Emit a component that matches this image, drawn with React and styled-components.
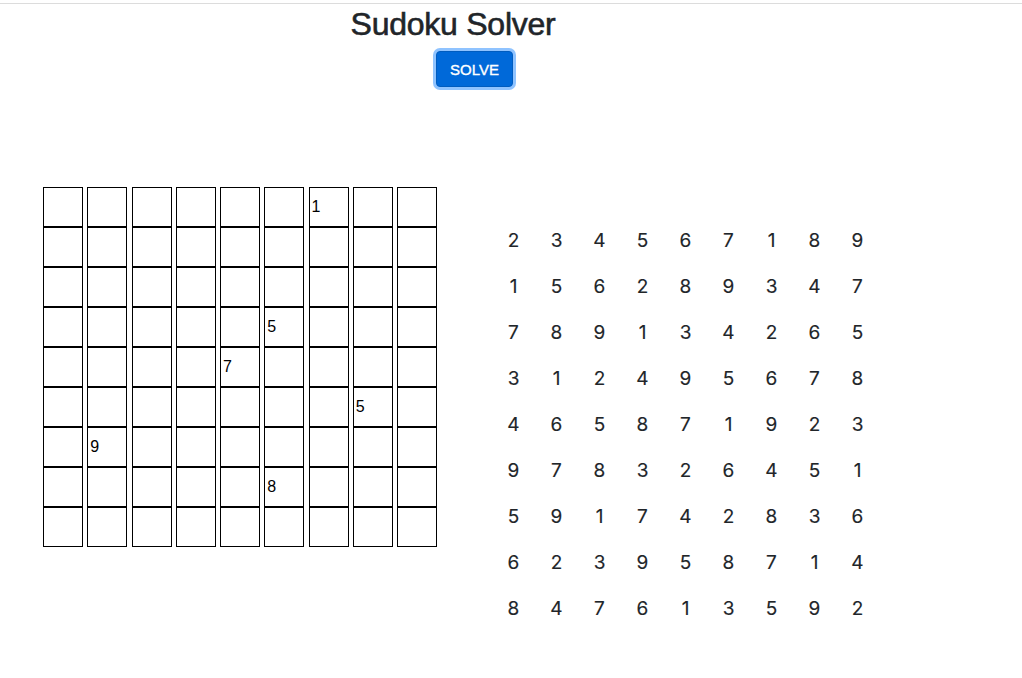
import React from "react";
import styled, { createGlobalStyle } from "styled-components";

const Global = createGlobalStyle`
  html, body { margin: 0; padding: 0; background: #fff; }
  body {
    font-family: "Liberation Sans", Arial, sans-serif;
    color: #212529;
  }
`;

const Page = styled.div`
  border-top: 1px solid #dcdcdc;
  margin-top: 3px;
  width: 1022px;
`;

const Title = styled.h2`
  margin: 1px 0 0;
  padding-right: 116px;
  text-align: center;
  font-family: "Liberation Sans", Arial, sans-serif;
  font-size: 32px;
  font-weight: 500;
  letter-spacing: -0.25px;
  -webkit-text-stroke: 0.6px #212529;
  line-height: 1.2;
  color: #212529;
`;

const ButtonRow = styled.div`
  display: flex;
  justify-content: center;
  padding-right: 73px;
  margin-top: 8px;
`;

const SolveButton = styled.button`
  height: 36px;
  padding: 0 13px;
  border: 1px solid #005cbf;
  border-radius: 4px;
  background: #0069d9;
  color: #fff;
  font-family: "Liberation Sans", Arial, sans-serif;
  font-size: 15px;
  font-weight: 500;
  -webkit-text-stroke: 0.35px #fff;
  box-shadow: 0 0 0 3px #8fc3ff;
  cursor: pointer;
`;

const Main = styled.div`
  display: flex;
  align-items: flex-start;
  padding-left: 43px;
  margin-top: 100px;
`;

const Board = styled.div`
  display: flex;
  gap: 4.25px;
`;

const Column = styled.div`
  display: flex;
  flex-direction: column;
`;

const Cell = styled.input`
  box-sizing: border-box;
  width: 40px;
  height: 40px;
  margin: 0;
  padding: 0 2px;
  border: 1px solid #000;
  border-radius: 0;
  outline: none;
  background: #fff;
  color: #000;
  font-family: "Liberation Sans", Arial, sans-serif;
  font-size: 16px;
`;

const Solution = styled.div`
  display: grid;
  grid-template-columns: repeat(9, 43px);
  grid-auto-rows: 46px;
  margin-left: 55px;
  margin-top: 31px;
`;

const Digit = styled.div`
  text-align: center;
  line-height: 46px;
  font-family: Inter, "Noto Sans", sans-serif;
  font-size: 19px;
  color: #212529;
  -webkit-text-stroke: 0.15px #212529;
`;

const givens = {
  "0-6": "1",
  "3-5": "5",
  "4-4": "7",
  "5-7": "5",
  "6-1": "9",
  "7-5": "8",
};

const solution = [
  [2, 3, 4, 5, 6, 7, 1, 8, 9],
  [1, 5, 6, 2, 8, 9, 3, 4, 7],
  [7, 8, 9, 1, 3, 4, 2, 6, 5],
  [3, 1, 2, 4, 9, 5, 6, 7, 8],
  [4, 6, 5, 8, 7, 1, 9, 2, 3],
  [9, 7, 8, 3, 2, 6, 4, 5, 1],
  [5, 9, 1, 7, 4, 2, 8, 3, 6],
  [6, 2, 3, 9, 5, 8, 7, 1, 4],
  [8, 4, 7, 6, 1, 3, 5, 9, 2],
];

const idx = [0, 1, 2, 3, 4, 5, 6, 7, 8];

export default function App() {
  return (
    <Page>
      <Global />
      <Title>Sudoku Solver</Title>
      <ButtonRow>
        <SolveButton>SOLVE</SolveButton>
      </ButtonRow>
      <Main>
        <Board>
          {idx.map((c) => (
            <Column key={c}>
              {idx.map((r) => (
                <Cell key={r} type="text" defaultValue={givens[`${r}-${c}`] || ""} />
              ))}
            </Column>
          ))}
        </Board>
        <Solution>
          {solution.map((row, r) =>
            row.map((d, c) => <Digit key={`${r}-${c}`}>{d}</Digit>)
          )}
        </Solution>
      </Main>
    </Page>
  );
}
